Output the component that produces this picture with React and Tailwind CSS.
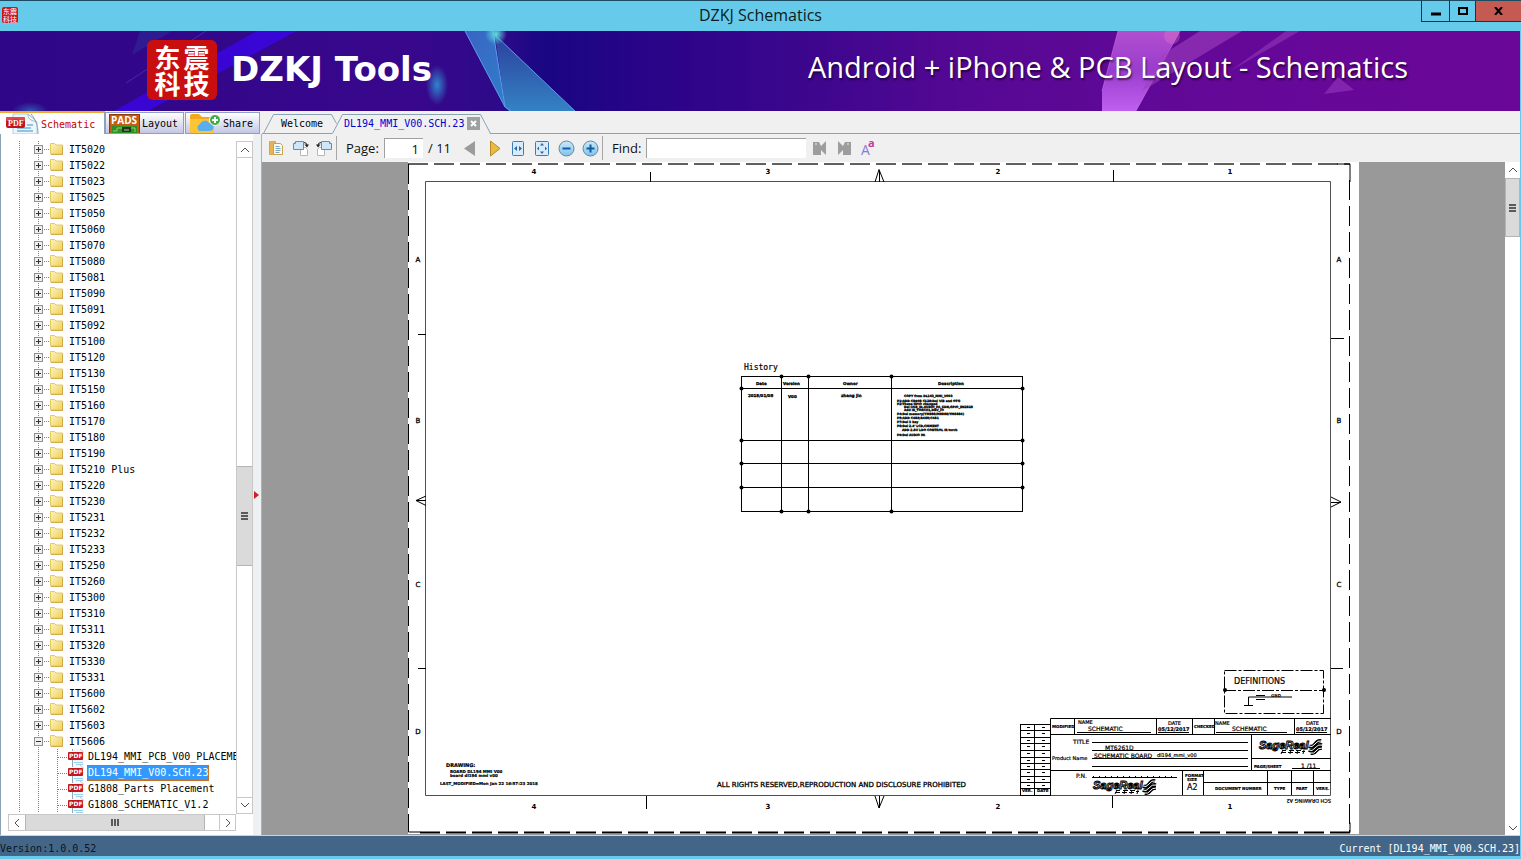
import { useState } from "react"

const folders = [
  "IT5020", "IT5022", "IT5023", "IT5025", "IT5050", "IT5060", "IT5070", "IT5080", "IT5081",
  "IT5090", "IT5091", "IT5092", "IT5100", "IT5120", "IT5130", "IT5150", "IT5160", "IT5170",
  "IT5180", "IT5190", "IT5210 Plus", "IT5220", "IT5230", "IT5231", "IT5232", "IT5233", "IT5250",
  "IT5260", "IT5300", "IT5310", "IT5311", "IT5320", "IT5330", "IT5331", "IT5600", "IT5602",
  "IT5603", "IT5606",
]

const files = ["DL194_MMI_PCB_V00_PLACEMENT", "DL194_MMI_V00.SCH.23", "G1808_Parts Placement", "G1808_SCHEMATIC_V1.2"]

/* ---------- Icons ---------- */

function FolderIcon() {
  return (
    <svg width="15" height="14" viewBox="0 0 15 14" className="shrink-0">
      <defs>
        <linearGradient id="folder" x1="0" y1="0" x2="1" y2="1">
          <stop offset="0" stopColor="#fff3b8" />
          <stop offset="1" stopColor="#f0cf5e" />
        </linearGradient>
      </defs>
      <path d="M1.500 1.500h4l1.500 1.500h6.500v9h-12z" fill="url(#folder)" stroke="#e3c768" />
      <path d="M2 12.500h12M13.500 4v8" stroke="#d2ab45" />
    </svg>
  )
}

function PdfSmallIcon() {
  return (
    <svg width="17" height="16" viewBox="0 0 17 16" className="shrink-0">
      <path d="M4 0h9l3 3v13H4z" fill="#f3f8fc" />
      <path d="M4.500 0v2M4.500 11v5" stroke="#8fa9ba" />
      <path d="M6 13.500h9M8 15.500h7" stroke="#9fd0ea" />
      <path d="M12 0l4 3.500" stroke="#b5cbd8" />
      <rect x="0" y="3" width="15" height="8" rx="1" fill="#c4161c" />
      <text x="1" y="9" fontSize="6" fontWeight="bold" fill="#fff" fontFamily="DejaVu Sans">PDF</text>
    </svg>
  )
}

function PdfTabIcon() {
  return (
    <svg width="34" height="21" viewBox="0 0 34 21" className="shrink-0">
      <path d="M8 1h15l9 8v12H8z" fill="#eef6fb" stroke="#b4cbd9" />
      <path d="M23 1c0 4 1 6 9 8z" fill="#fff" stroke="#9db9ca" />
      <path d="M12 15h14M12 18h16M22 12h6" stroke="#8fc4e4" strokeWidth="2" />
      <path d="M26 1c4 5 7 10 7 20" stroke="#7fa3b8" fill="none" />
      <rect x="1" y="4" width="19" height="11" rx="2" fill="#c4141b" />
      <path d="M1 8q10-3 19 0V5q0-1-1-1H2q-1 0-1 1z" fill="#dc4a4e" />
      <text x="3" y="13" fontSize="8" fontWeight="bold" fill="#fff" fontFamily="Liberation Serif">PDF</text>
    </svg>
  )
}

function PadsIcon() {
  return (
    <svg width="31" height="19" viewBox="0 0 31 19" className="shrink-0">
      <rect width="31" height="19" fill="#c75b12" />
      <rect x=".5" y=".5" width="30" height="19" fill="none" stroke="#8d3c06" />
      <text x="2" y="10" fontSize="10" fontWeight="bold" fill="#fff" fontFamily="Open Sans">PADS</text>
      <path d="M3 12h25v7H3z" fill="#2f8f28" />
      <path d="M4 17h4v-3h5M18 14h8v4" stroke="#8fd45c" fill="none" />
      <rect x="13" y="13" width="9" height="5" fill="#1a3a18" />
      <rect x="15" y="15" width="5" height="2" fill="#6a7a60" />
    </svg>
  )
}

function ShareIcon() {
  return (
    <svg width="32" height="20" viewBox="0 0 32 20" className="shrink-0">
      <path d="M1 3q0-2 2-2h7l3 3h12v16H3q-2 0-2-2z" fill="#f5a81c" />
      <path d="M1 6h24v14H3q-2 0-2-2z" fill="#fcc536" />
      <path d="M10 18a4 4 0 0 1 1-7 5 5 0 0 1 9-1 4 4 0 0 1 1 8z" fill="#5aaef0" />
      <circle cx="26" cy="7" r="5.500" fill="#3fae49" stroke="#fff" />
      <path d="M26 4v6M23 7h6" stroke="#fff" strokeWidth="2" />
    </svg>
  )
}

function CopyIcon() {
  return (
    <svg width="15" height="16" viewBox="0 0 15 16">
      <path d="M.5 1.500h6v13h-6z" fill="#f2c166" stroke="#d9a446" />
      <path d="M1 1l5 1v13l-5-1z" fill="#e8b355" />
      <path d="M4.500 3.500h7l2 2v9h-9z" fill="#fffbe8" stroke="#c9a24e" />
      <path d="M6.500 6.500h4M6.500 8.500h5M6.500 10.500h5M6.500 12.500h4" stroke="#79a3c4" />
    </svg>
  )
}

function RotateIcon({ flip }) {
  return (
    <svg width="17" height="17" viewBox="0 0 17 17" className={flip ? "-scale-x-100" : ""}>
      <path d="M8.500 7.500h5l2 2v6h-7z" fill="#fff" stroke="#b8b8b8" />
      <path d="M3.500 1.500h8v8h-10v-6z" fill="#cfe5f8" stroke="#5c8fc0" />
      <path d="M1.500 3.500h2v-2" fill="#fff" stroke="#5c8fc0" />
      <path d="M12 2.500q3 0 3 3" fill="none" stroke="#222" />
      <path d="M12.500 4.500h4.500l-2 3z" fill="#222" />
    </svg>
  )
}

function TriangleIcon({ left }) {
  return (
    <svg width="13" height="17" viewBox="0 0 13 17">
      {left ? (
        <path d="M11 1v15L0 8.500z" fill="#9b9b9b" />
      ) : (
        <path d="M2.500 1v15L12 8.500z" fill="#e8bb45" stroke="#b98a22" />
      )}
    </svg>
  )
}

function FitIcon({ page }) {
  return (
    <svg width="14" height="17" viewBox="0 0 14 17">
      <rect x={page ? 0.5 : 1.5} y="1.500" width={page ? 13 : 11} height="14" rx="1" fill="#d9ecfb" stroke="#3c7ab8" />
      <path d="M6 6v5L3 8.500zM8 6v5l3-2.500z" fill={page ? "none" : "#2a67a8"} />
      {page && <path d="M7 3l2 2.500H5zM7 14l2-2.500H5zM2 8.500l2-2v4zM12 8.500l-2-2v4z" fill="#2a67a8" />}
    </svg>
  )
}

function ZoomIcon({ plus }) {
  return (
    <svg width="17" height="17" viewBox="0 0 17 17">
      <defs>
        <linearGradient id="orb" x1="0" y1="0" x2="0" y2="1">
          <stop offset="0" stopColor="#c9e9fb" />
          <stop offset="1" stopColor="#7cc3f0" />
        </linearGradient>
      </defs>
      <circle cx="8.500" cy="8.500" r="7.500" fill="url(#orb)" stroke="#6d8296" />
      <path d={plus ? "M4.500 8.500h8M8.500 4.500v8" : "M4.500 8.500h8"} stroke="#155a9c" strokeWidth="2" />
    </svg>
  )
}

function BinocularIcon({ flip }) {
  return (
    <svg width="16" height="16" viewBox="0 0 16 16" className={flip ? "-scale-x-100" : ""}>
      <path d="M1 2h6l2 4 5-5v14l-5-5v5H1z" fill="#9d9d9d" />
      <path d="M3 4h2" stroke="#f0f0f0" />
    </svg>
  )
}

function Chevron({ dir }) {
  const paths = {
    up: "M1 7l4-4 4 4",
    down: "M1 3l4 4 4-4",
    left: "M7 1L3 5l4 4",
    right: "M3 1l4 4-4 4",
  }
  return (
    <svg width="10" height="10" viewBox="0 0 10 10">
      <path d={paths[dir]} fill="none" stroke="#505050" />
    </svg>
  )
}

/* ---------- Header ---------- */

function TitleBar() {
  return (
    <header className="relative flex h-[31px] shrink-0 items-start border-t border-[#1c4c62] bg-[#66cbea]">
      <div className="absolute left-[2px] top-[6px] grid h-4 w-4 grid-cols-2 rounded-xs bg-[#c8161d] px-px font-['Noto_Sans_CJK_SC',sans-serif] text-[7px] leading-[8px] text-white">
        <span>东</span>
        <span>震</span>
        <span>科</span>
        <span>技</span>
      </div>
      <h1 className="flex-1 pl-[100px] pt-0.5 text-center font-['Open_Sans',sans-serif] text-[16px] leading-6 text-[#0b1c24]">
        DZKJ Schematics
      </h1>
      <div className="flex h-[21px] border-b border-l border-[#23303a]">
        <button aria-label="Minimize" className="flex w-7 items-center justify-center border-r border-[#23303a]">
          <svg width="10" height="10"><path d="M0 8h10" stroke="#000" strokeWidth="3" /></svg>
        </button>
        <button aria-label="Maximize" className="flex w-[26px] items-center justify-center border-r border-[#23303a]">
          <svg width="10" height="8"><path d="M1 1h8v6H1z" fill="none" stroke="#000" strokeWidth="2" /></svg>
        </button>
        <button aria-label="Close" className="flex w-[45px] items-center justify-center bg-[#c45a52]">
          <svg width="9" height="8"><path d="M1 0l7 8M8 0L1 8" stroke="#000" strokeWidth="2" /></svg>
        </button>
      </div>
    </header>
  )
}

function BannerArt() {
  return (
    <svg className="absolute inset-0 h-full w-full" viewBox="0 0 1520 80" preserveAspectRatio="none">
      <defs>
        <linearGradient id="sky" x1="0" x2="1">
          <stop offset="0" stopColor="#2f0688" />
          <stop offset=".27" stopColor="#38078c" />
          <stop offset=".33" stopColor="#2c0a88" />
          <stop offset=".36" stopColor="#190682" />
          <stop offset=".42" stopColor="#280488" />
          <stop offset=".52" stopColor="#3a068c" />
          <stop offset=".64" stopColor="#560894" />
          <stop offset=".8" stopColor="#640898" />
          <stop offset="1" stopColor="#6a0798" />
        </linearGradient>
        <linearGradient id="shard" x1="0" x2="1" y1="0" y2="1">
          <stop offset="0" stopColor="#3a63c4" />
          <stop offset="1" stopColor="#2f7fc8" />
        </linearGradient>
        <linearGradient id="shardDark" x1="0" x2="0" y1="0" y2="1">
          <stop offset="0" stopColor="#2b3f9c" />
          <stop offset="1" stopColor="#3482c4" />
        </linearGradient>
        <linearGradient id="pink" x1="0" x2="0" y1="0" y2="1">
          <stop offset="0" stopColor="#b24fd0" />
          <stop offset=".5" stopColor="#9a3ccc" />
          <stop offset="1" stopColor="#c060f0" />
        </linearGradient>
        <radialGradient id="glow">
          <stop offset="0" stopColor="#2f86cc" />
          <stop offset="1" stopColor="#2f86cc" stopOpacity="0" />
        </radialGradient>
        <radialGradient id="spark">
          <stop offset="0" stopColor="#5fe0e0" />
          <stop offset="1" stopColor="#5fe0e0" stopOpacity="0" />
        </radialGradient>
      </defs>
      <rect width="1520" height="80" fill="url(#sky)" />
      <path d="M257 0h40L148 80h-34z" fill="#3a06e0" opacity=".85" />
      <path d="M140 0h32l-40 24z" fill="#2c3a98" opacity=".4" />
      <path d="M206 0L126 52" stroke="#4a3cc0" opacity=".7" />
      <ellipse cx="30" cy="80" rx="18" ry="9" fill="url(#glow)" opacity=".6" />
      <ellipse cx="437" cy="54" rx="11" ry="20" fill="url(#glow)" />
      <path d="M465 0h28l12 76z" fill="url(#shard)" />
      <path d="M495 4l80 76h-66l-4-4z" fill="url(#shardDark)" />
      <path d="M465 0l40 76 6 4M493 0l12 76M495 4l80 76" stroke="#5c9cf0" fill="none" />
      <circle cx="496" cy="3" r="11" fill="url(#spark)" />
      <path d="M1118 0h62l-44 80h-34v-20z" fill="url(#pink)" />
      <path d="M1118 0l-16 60M1180 0l-44 80" stroke="#d080f0" opacity=".5" />
      <path d="M1200 0h42l-100 60 20-36z" fill="#a040c0" opacity=".6" />
      <path d="M1286 0h14l-70 40z" fill="#9038b8" opacity=".6" />
      <path d="M1338 46l16 13-30 4z" fill="#9030b8" opacity=".7" />
      <circle cx="1172" cy="5" r="8" fill="#f080c0" opacity=".3" />
    </svg>
  )
}

function Banner() {
  return (
    <div className="relative mr-px h-20 shrink-0 overflow-hidden">
      <BannerArt />
      <div className="relative flex h-full items-start pl-[147px] pr-[112px] pt-[9px]">
        <div className="grid h-[60px] w-[70px] grid-cols-2 rounded-md bg-[#c90e10] px-1.5 py-1 text-center font-['Noto_Sans_CJK_SC',sans-serif] text-[26px] font-bold leading-[26px] text-white">
          <span>东</span>
          <span>震</span>
          <span>科</span>
          <span>技</span>
        </div>
        <p className="ml-3.5 mt-[9px] whitespace-nowrap font-['DejaVu_Sans',sans-serif] text-[34px] font-bold leading-10 text-white">DZKJ Tools</p>
        <p className="ml-auto mt-[7px] whitespace-nowrap font-['Open_Sans',sans-serif] text-[29px] leading-10 text-white [text-shadow:1px_2px_2px_rgba(0,0,0,0.6)]">
          Android + iPhone &amp; PCB Layout - Schematics
        </p>
      </div>
    </div>
  )
}

/* ---------- Left panel ---------- */

function LeftTabs() {
  return (
    <div className="flex h-[23px] shrink-0 items-end">
      <button className="flex h-[23px] w-[105px] items-center gap-0.5 border-r border-t-2 border-r-[#8ba3b5] border-t-[#f0a830] bg-white pl-[5px] text-[#c80000]">
        <PdfTabIcon />
        <span className="pt-0.5">Schematic</span>
      </button>
      <button className="flex h-[22px] w-[79px] items-center gap-0.5 border border-[#8f9fbd] bg-linear-to-b from-white to-[#c3c7e4] pl-[3px]">
        <PadsIcon />
        <span className="pt-0.5">Layout</span>
      </button>
      <button className="ml-px flex h-[22px] w-[75px] items-center gap-0.5 border border-[#8f9fbd] bg-linear-to-b from-white to-[#c3c7e4] pl-[3px]">
        <ShareIcon />
        <span className="pt-0.5">Share</span>
      </button>
    </div>
  )
}

function FolderRow({ name, open }) {
  return (
    <li className="flex h-4 items-center whitespace-pre">
      <svg width="41" height="16" className="shrink-0">
        <path d="M11.500 0v16M30.500 0v16M36 8.500h6" stroke="#808080" strokeDasharray="1 1" />
        <rect x="26.500" y="4.500" width="8" height="8" fill="#efefef" stroke="#919191" />
        <path d={open ? "M28 8.500h5" : "M28 8.500h5M30.500 6v5"} stroke="#333" />
      </svg>
      <FolderIcon />
      <span className="pl-[5px] pt-0.5">{name}</span>
    </li>
  )
}

function FileRow({ name, selected, onSelect }) {
  return (
    <li className="flex h-4 items-center whitespace-pre">
      <svg width="60" height="16" className="shrink-0">
        <path d="M11.500 0v16M30.500 0v16M49.500 0v16M50 8.500h10" stroke="#808080" strokeDasharray="1 1" />
      </svg>
      <PdfSmallIcon />
      <button
        onClick={onSelect}
        className={
          selected
            ? "ml-0.5 h-4 border border-dotted border-[#c96b1a] bg-[#3399ff] text-white"
            : "ml-0.5 h-4 border border-transparent"
        }
      >
        {name}
      </button>
    </li>
  )
}

function Sidebar() {
  const [current, setCurrent] = useState(files[1])

  return (
    <aside className="flex w-[262px] shrink-0 flex-col bg-[#f0f0f0]">
      <LeftTabs />
      <div className="flex min-h-0 flex-1 border-l border-[#8ba3b5] bg-white pb-1 pl-[7px] pt-[7px]">
        <div className="flex min-w-0 flex-1 flex-col">
          <div className="flex min-h-0 flex-1">
            <ul className="min-w-0 flex-1 overflow-hidden">
              {folders.map((name) => (
                <FolderRow key={name} name={name} open={name === "IT5606"} />
              ))}
              {files.map((name) => (
                <FileRow key={name} name={name} selected={name === current} onSelect={() => setCurrent(name)} />
              ))}
            </ul>
            <div className="flex w-[17px] flex-col border border-[#c8c8c8] bg-white">
              <button aria-label="Scroll up" className="flex h-4 items-center justify-center border-b border-[#c8c8c8]"><Chevron dir="up" /></button>
              <div className="flex-[309]" />
              <div className="flex flex-[99] flex-col items-center justify-center gap-px border-y border-[#b4b4b4] bg-[#dadada]">
                <span className="h-0.5 w-[7px] bg-[#5a5a5a]" />
                <span className="h-0.5 w-[7px] bg-[#5a5a5a]" />
                <span className="h-0.5 w-[7px] bg-[#5a5a5a]" />
              </div>
              <div className="flex-[232]" />
              <button aria-label="Scroll down" className="flex h-4 items-center justify-center border-t border-[#c8c8c8]"><Chevron dir="down" /></button>
            </div>
          </div>
          <div className="mr-[17px] flex h-[17px] shrink-0 border border-[#c8c8c8] bg-white">
            <button aria-label="Scroll left" className="flex w-4 items-center justify-center"><Chevron dir="left" /></button>
            <div className="flex flex-[181] items-center justify-center gap-px border-x border-[#b4b4b4] bg-[#dadada]">
              <span className="h-[7px] w-0.5 bg-[#5a5a5a]" />
              <span className="h-[7px] w-0.5 bg-[#5a5a5a]" />
              <span className="h-[7px] w-0.5 bg-[#5a5a5a]" />
            </div>
            <div className="flex-[14]" />
            <button aria-label="Scroll right" className="flex w-4 items-center justify-center border-l border-[#c8c8c8]"><Chevron dir="right" /></button>
          </div>
        </div>
        {/* Splitter */}
        <div className="-mb-1 -mt-[7px] flex w-[9px] items-center border-r border-[#a8b4bc] bg-[#eef1f3]">
          <svg width="6" height="8" className="ml-px mt-5"><path d="M0 0v8l5-4z" fill="#d02020" /></svg>
        </div>
      </div>
    </aside>
  )
}

/* ---------- Document area ---------- */

function DocTabs() {
  return (
    <div className="flex h-[23px] shrink-0 items-end border-b border-[#8ba3b5] bg-[#f0f0f0]">
      <button className="relative flex h-[21px] w-[74px] items-center pl-[19px]">
        <svg className="absolute -bottom-px left-0" width="79" height="21">
          <path d="M1.500 20.500l10-19h58l5 9" fill="none" stroke="#8ba3b5" />
        </svg>
        <span className="relative pt-0.5">Welcome</span>
      </button>
      <div className="relative flex h-[21px] w-[160px] items-center">
        <svg className="absolute -bottom-px left-[-5px]" width="165" height="21">
          <path d="M1 21l11-20h137l10 20z" fill="#f0f0f0" />
          <path d="M1.500 20.500l10-19h138l10 19" fill="none" stroke="#8ba3b5" />
        </svg>
        <button className="relative pl-2 pt-0.5 text-[#0000d0]">DL194_MMI_V00.SCH.23</button>
        <button aria-label="Close tab" className="relative ml-[3px] mt-0.5 flex h-[13px] w-[13px] items-center justify-center bg-[#a0a0a0]">
          <svg width="7" height="7"><path d="M1 1l5 5M6 1L1 6" stroke="#fff" strokeWidth="2" /></svg>
        </button>
      </div>
    </div>
  )
}

function ToolButton({ label, children }) {
  return (
    <button aria-label={label} className="flex h-6 w-6 items-center justify-center">
      {children}
    </button>
  )
}

function Toolbar() {
  return (
    <div className="flex h-7 shrink-0 items-center bg-[#f0f0f0] pl-0.5 font-['Open_Sans',sans-serif] text-[13px] text-[#111]">
      <ToolButton label="Copy"><CopyIcon /></ToolButton>
      <ToolButton label="Rotate right"><RotateIcon /></ToolButton>
      <ToolButton label="Rotate left"><RotateIcon flip /></ToolButton>
      <div className="h-6 w-px bg-[#a8a8a8]" />
      <label htmlFor="page" className="ml-[9px] w-[38px]">Page:</label>
      <input id="page" defaultValue="1" className="h-5 w-[39px] border-l border-t border-[#a0a0a0] bg-white pr-1 text-right" />
      <span className="w-[35px] pl-[5px]">/ 11</span>
      <ToolButton label="Previous page"><TriangleIcon left /></ToolButton>
      <ToolButton label="Next page"><TriangleIcon /></ToolButton>
      <ToolButton label="Fit width"><FitIcon /></ToolButton>
      <ToolButton label="Fit page"><FitIcon page /></ToolButton>
      <ToolButton label="Zoom out"><ZoomIcon /></ToolButton>
      <ToolButton label="Zoom in"><ZoomIcon plus /></ToolButton>
      <div className="h-6 w-px bg-[#a8a8a8]" />
      <label htmlFor="find" className="ml-[9px] w-[34px]">Find:</label>
      <input id="find" className="h-5 w-40 border-l border-t border-[#a0a0a0] bg-white px-1" />
      <div className="ml-0.5 flex">
        <ToolButton label="Find previous"><BinocularIcon /></ToolButton>
        <ToolButton label="Find next"><BinocularIcon flip /></ToolButton>
        <ToolButton label="Match case">
          <svg width="15" height="18" viewBox="0 0 15 18" className="overflow-visible">
            <text x="0" y="16" fontSize="14" fill="#8a78e0" fontFamily="Open Sans">A</text>
            <text x="7" y="8" fontSize="11" fontWeight="bold" fill="#c8389c" fontFamily="Open Sans">a</text>
          </svg>
        </ToolButton>
      </div>
    </div>
  )
}

const historyRows = [376, 388, 440, 463, 487, 511]
const historyCols = [741, 781, 808, 891, 1022]
const historyNotes = [
  [904, 397, "COPY from DL163_MMI_V003"],
  [897, 402, "P1:ADD CR908 C128:Del VIB and OTG"],
  [897, 405, "P2:These GPIO changed"],
  [904, 408, "Del USB_ID,AUDIO_PA_SDN,GPIO_EN2828"],
  [904, 411, "Add IR_TORCH1,DRV_IO"],
  [897, 415, "P4:Del memory(YM888/M8888/YM8884)"],
  [897, 419, "P5:ADD C488;R485;C481"],
  [897, 423, "P7:Del 3 key"],
  [897, 427, "P8:Del 2.4' LCD,CMMENT"],
  [902, 431, "ADD 2.8V LDO CONTROL IR torch"],
  [897, 436, "P9:Del AUDIO PA"],
]

const revisionRows = [724, 730, 737, 743, 750, 757, 763, 769, 776, 782, 788, 795]

function HistoryTable() {
  return (
    <g>
      <text x="744" y="370" fontSize="8" fontFamily="DejaVu Sans Mono" stroke="#000" strokeWidth="0.200">History</text>
      <g stroke="#000">
        {historyRows.map((y) => (
          <path key={y} d={`M741 ${y + 0.5}H1023`} />
        ))}
        {historyCols.map((x) => (
          <path key={x} d={`M${x + 0.5} 376V512`} />
        ))}
      </g>
      {historyCols.slice(1, 4).map((x) => [376, 511].map((y) => <circle key={`${x}-${y}`} cx={x + 0.5} cy={y + 0.5} r="2" />))}
      {[741, 1022].map((x) => historyRows.slice(1, 5).map((y) => <circle key={`${x}-${y}`} cx={x + 0.5} cy={y + 0.5} r="2" />))}
      <g fontSize="4" fontWeight="bold" fontFamily="DejaVu Sans" stroke="#000" strokeWidth="0.300">
        <text x="756" y="385">Date</text>
        <text x="783" y="385">Version</text>
        <text x="843" y="385">Owner</text>
        <text x="938" y="385">Description</text>
        <text x="748" y="397">2018/01/08</text>
        <text x="788" y="398">V00</text>
        <text x="841" y="397">zhang jin</text>
        <g fontSize="3">
          {historyNotes.map(([x, y, text]) => (
            <text key={text} x={x} y={y}>{text}</text>
          ))}
        </g>
      </g>
    </g>
  )
}

function SageLogo({ x, y }) {
  const stripes = "M50 7q3 2 6-2t6-3M50 11q3 2 6-2t7-3M52 14q3 1 5-2t6-3"
  return (
    <g transform={`translate(${x} ${y})`}>
      <text x="0" y="10" fontSize="11" fontWeight="bold" fontStyle="italic" fontFamily="Liberation Sans" fill="#fff" stroke="#000">
        SageReal
      </text>
      <path d="M23 11.500h4M22 13.500h5M30 11.500h5M29 13.500h5M37 11.500h5M36 13.500h5M43 12.500h3M24 11l-2 4M32 11l-1 4M39 11l-1 4M45 11l-1 4" stroke="#000" />
      <path d={stripes} fill="none" stroke="#000" strokeWidth="3.500" />
      <path d={stripes} fill="none" stroke="#fff" />
    </g>
  )
}

function TitleBlock() {
  return (
    <g>
      {/* Definitions */}
      <g fill="none" stroke="#000" strokeDasharray="12 2 3 2">
        <path d="M1224.500 670.500h99v43h-99zM1224 690.500h99" />
      </g>
      <circle cx="1225" cy="690" r="2" />
      <circle cx="1324" cy="690" r="2" />
      <text x="1234" y="684" fontSize="8" fontFamily="DejaVu Sans" stroke="#000" strokeWidth="0.200">DEFINITIONS</text>
      <path d="M1244 705.500h9M1248.500 705v-8H1292M1256 695.500h9M1256 699.500h9" fill="none" stroke="#000" />
      <text x="1271" y="697" fontSize="4" fontWeight="bold" fontFamily="DejaVu Sans">GND</text>

      {/* Revision columns */}
      <g stroke="#000" fill="none">
        <path d="M1020.500 724v71M1034.500 724v71" />
        {revisionRows.map((y) => (
          <path key={y} d={`M1020 ${y + 0.5}h31`} />
        ))}
        {revisionRows.slice(0, 10).map((y) => (
          <path key={y} d={`M1027 ${y + 3.5}h3M1042 ${y + 3.5}h3`} />
        ))}
        {/* Main block */}
        <path d="M1050.500 795v-76.500H1331M1050 734.500h281M1050 770.500h281" />
        <path d="M1074.500 719v15M1156.500 719v15M1192.500 719v15M1214.500 719v15M1294.500 719v15" />
        <path d="M1077 732.500h74M1158 732.500h31M1216 732.500h71M1296 732.500h31" />
        <path d="M1092 742.500h156M1092 750.500h156M1092 758.500h156M1092 766.500h156" />
        <path d="M1251.500 734v36M1251 758.500h80M1182.500 771v24M1203.500 771v24M1203 782.500h128" />
        <path d="M1267.500 771v24M1291.500 771v24M1313.500 771v24M1292 768.500h28" />
        <path d="M1092 777.500h85" />
        <path d="M1093 776.500h84" strokeDasharray="1 5" />
      </g>
      <g fontFamily="DejaVu Sans" fontSize="5" stroke="#000" strokeWidth="0.200">
        <g fontSize="4" fontWeight="bold">
          <text x="1022" y="792">VER.</text>
          <text x="1037" y="792">DATE</text>
          <text x="1052" y="728">MODIFIED</text>
          <text x="1194" y="728">CHECKED</text>
          <text x="1185" y="777">FORMAT</text>
          <text x="1187" y="781">SIZE</text>
          <text x="1254" y="768">PAGE/SHEET</text>
          <text x="1215" y="790">DOCUMENT NUMBER</text>
          <text x="1274" y="790">TYPE</text>
          <text x="1296" y="790">PART</text>
          <text x="1316" y="790">VERS.</text>
        </g>
        <text x="1078" y="724">NAME</text>
        <text x="1215" y="725">NAME</text>
        <text x="1168" y="725">DATE</text>
        <text x="1306" y="725">DATE</text>
        <text x="1158" y="731" fontWeight="bold">05/12/2017</text>
        <text x="1296" y="731" fontWeight="bold">05/12/2017</text>
        <text x="1073" y="744" fontSize="6">TITLE</text>
        <text x="1052" y="760">Product Name</text>
        <text x="1157" y="757" fontSize="5">dl194_mmi_v00</text>
        <text x="1076" y="778" fontSize="6">P.N.</text>
        <g fontSize="6">
          <text x="1088" y="731">SCHEMATIC</text>
          <text x="1232" y="731">SCHEMATIC</text>
          <text x="1105" y="750">MT6261D</text>
          <text x="1094" y="758">SCHEMATIC BOARD</text>
          <text x="1301" y="768">1 /11</text>
        </g>
        <text x="1187" y="790" fontSize="8">A2</text>
        <text fontSize="5" transform="translate(1331 799) rotate(180)">SCH DRAWING A2</text>
      </g>
      <SageLogo x={1259} y={739} />
      <SageLogo x={1093} y={779} />
    </g>
  )
}

function Sheet() {
  return (
    <svg width="951" height="672" viewBox="408 162 951 672" className="shrink-0 bg-white">
      {/* Cut marks and frame */}
      <g fill="none">
        <path d="M408 164h942" stroke="#606060" strokeWidth="2" strokeDasharray="20 6" />
        <path d="M420 832.500h930" stroke="#000" strokeWidth="2" strokeDasharray="20 6" />
        <path d="M408.500 164v668M1349.500 180v652" stroke="#000" strokeDasharray="20 6" />
        <path d="M1337 164h13v18M1337 832.500h13v-10M408.500 822v10h12" stroke="#000" />
        <path d="M425.500 181.500h905v614h-905z" stroke="#505050" />
        <path d="M650.500 172v10M1113.500 170v12M646.500 796v13M1112.500 796v12" stroke="#000" />
        <path d="M418 334.500h8M418 668.500h8M1331 338.500h13M1331 668.500h12" stroke="#000" />
        <path d="M875 182l4-12.500 5 12.500M879.500 170v12M875 796l4 12 5-12M879.500 796v12" stroke="#000" />
        <path d="M426 496l-10 4.500 10 5M416 500.500h10M1331 497l10 5-10 5M1331 502.500h10" stroke="#000" />
      </g>
      <g fontSize="7" fontWeight="bold" fontFamily="DejaVu Sans" textAnchor="middle">
        {[[534, "4"], [768, "3"], [998, "2"], [1230, "1"]].map(([x, label]) => (
          <g key={label}>
            <text x={x} y="174">{label}</text>
            <text x={x} y="809">{label}</text>
          </g>
        ))}
      </g>
      <g fontSize="7" fontFamily="DejaVu Sans" textAnchor="middle" stroke="#000" strokeWidth="0.300">
        {[[262, "A"], [423, "B"], [587, "C"], [734, "D"]].map(([y, label]) => (
          <g key={label}>
            <text x="418" y={y}>{label}</text>
            <text x="1339" y={y}>{label}</text>
          </g>
        ))}
      </g>

      <HistoryTable />

      <g fontFamily="DejaVu Sans" fontWeight="bold" fontSize="4" stroke="#000" strokeWidth="0.200">
        <text x="446" y="767" fontSize="5">DRAWING:</text>
        <text x="450" y="773">BOARD DL194 MMI V00</text>
        <text x="450" y="777">board dl194 mmi v00</text>
        <text x="440" y="785">LAST_MODIFIED=Mon Jan 22 16:57:23 2018</text>
      </g>
      <text x="717" y="787" fontSize="7" fontFamily="DejaVu Sans" stroke="#000" strokeWidth="0.300">
        ALL RIGHTS RESERVED,REPRODUCTION AND DISCLOSURE PROHIBITED
      </text>

      <TitleBlock />
    </svg>
  )
}

function Viewer() {
  return (
    <main className="flex min-w-0 flex-1 flex-col border-r border-[#66cbea]">
      <DocTabs />
      <Toolbar />
      <div className="flex min-h-0 flex-1">
        <div className="flex min-w-0 flex-1 justify-center overflow-hidden bg-[#999]">
          <Sheet />
        </div>
        <div className="flex w-[15px] flex-col bg-white">
          <button aria-label="Page up" className="flex h-4 items-center justify-center"><Chevron dir="up" /></button>
          <div className="flex flex-[57] flex-col items-center justify-center gap-px border border-[#b4b4b4] bg-[#dadada]">
            <span className="h-0.5 w-[7px] bg-[#5a5a5a]" />
            <span className="h-0.5 w-[7px] bg-[#5a5a5a]" />
            <span className="h-0.5 w-[7px] bg-[#5a5a5a]" />
          </div>
          <div className="flex-[584]" />
          <button aria-label="Page down" className="flex h-[14px] items-center justify-center"><Chevron dir="down" /></button>
        </div>
      </div>
    </main>
  )
}

function App() {
  return (
    <div className="flex h-screen flex-col overflow-hidden bg-[#66cbea] font-['DejaVu_Sans_Mono',monospace] text-[10px] leading-[14px] text-black">
      <TitleBar />
      <Banner />
      <div className="flex min-h-0 flex-1">
        <Sidebar />
        <Viewer />
      </div>
      <footer className="mb-[3px] mr-px flex h-[21px] shrink-0 items-end justify-between border-t border-[#c8d4de] bg-[#436688]">
        <span className="text-[#0c1420]">Version:1.0.0.52</span>
        <span className="text-white">Current [DL194_MMI_V00.SCH.23]</span>
      </footer>
    </div>
  )
}

export default App
